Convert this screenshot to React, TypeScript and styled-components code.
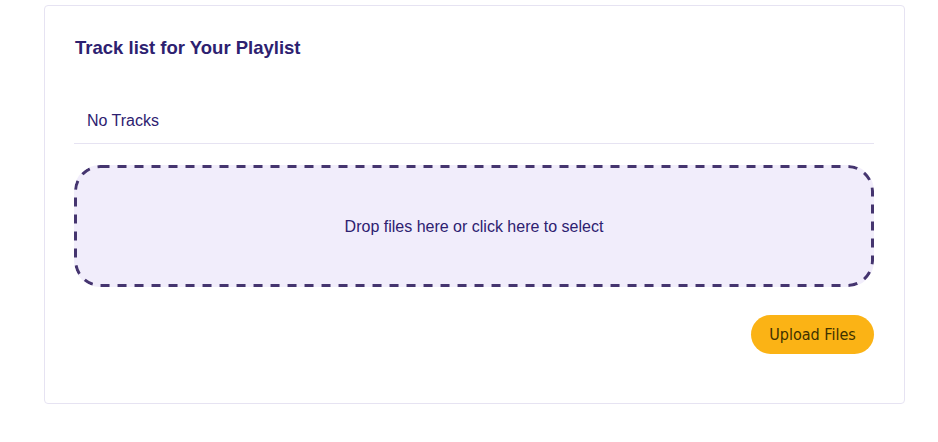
import React from "react";
import styled, { createGlobalStyle } from "styled-components";

const GlobalStyle = createGlobalStyle`
  html, body { margin: 0; padding: 0; background: #ffffff; }
  body { font-family: "Liberation Sans", Arial, sans-serif; }
  * { box-sizing: border-box; }
`;

const dashedOutline = encodeURIComponent(
  `<svg xmlns='http://www.w3.org/2000/svg' width='800' height='122'><rect x='1.5' y='1.5' width='797' height='119' rx='25' ry='25' fill='none' stroke='#45356f' stroke-width='3' stroke-dasharray='9 8'/></svg>`
);

const Page = styled.div`
  padding: 5px 0 0 44px;
`;

const Card = styled.section`
  width: 861px;
  border: 1px solid #e6e3f2;
  border-radius: 4px;
  padding: 31px 30px 49px 29px;
  display: flex;
  flex-direction: column;
`;

const Title = styled.h2`
  margin: 0;
  padding-left: 1px;
  font-size: 18.5px;
  line-height: 22px;
  font-weight: 700;
  color: #2d2170;
`;

const TrackList = styled.ul`
  list-style: none;
  margin: 38px 0 0;
  padding: 0;
`;

const TrackRow = styled.li`
  padding: 12px 12px 10px 13px;
  font-size: 16px;
  line-height: 24px;
  color: #2d2170;
  border-bottom: 1px solid #e6e3f2;
`;

const DropZone = styled.div`
  margin-top: 21px;
  height: 122px;
  border-radius: 26px;
  background-color: #f1edfb;
  background-image: url("data:image/svg+xml,${dashedOutline}");
  background-repeat: no-repeat;
  display: flex;
  align-items: center;
  justify-content: center;
  padding-top: 2px;
  font-size: 16px;
  color: #2d2170;
  cursor: pointer;
`;

const Actions = styled.div`
  margin-top: 28px;
  display: flex;
  justify-content: flex-end;
`;

const UploadButton = styled.button`
  width: 123px;
  height: 39px;
  border: none;
  border-radius: 20px;
  background: #fbb315;
  color: #3f3100;
  font-family: "DejaVu Sans Condensed", "DejaVu Sans", sans-serif;
  font-size: 16px;
  padding: 0;
  cursor: pointer;
`;

export default function App() {
  return (
    <>
      <GlobalStyle />
      <Page>
        <Card>
          <Title>Track list for Your Playlist</Title>
          <TrackList>
            <TrackRow>No Tracks</TrackRow>
          </TrackList>
          <DropZone>Drop files here or click here to select</DropZone>
          <Actions>
            <UploadButton>Upload Files</UploadButton>
          </Actions>
        </Card>
      </Page>
    </>
  );
}
